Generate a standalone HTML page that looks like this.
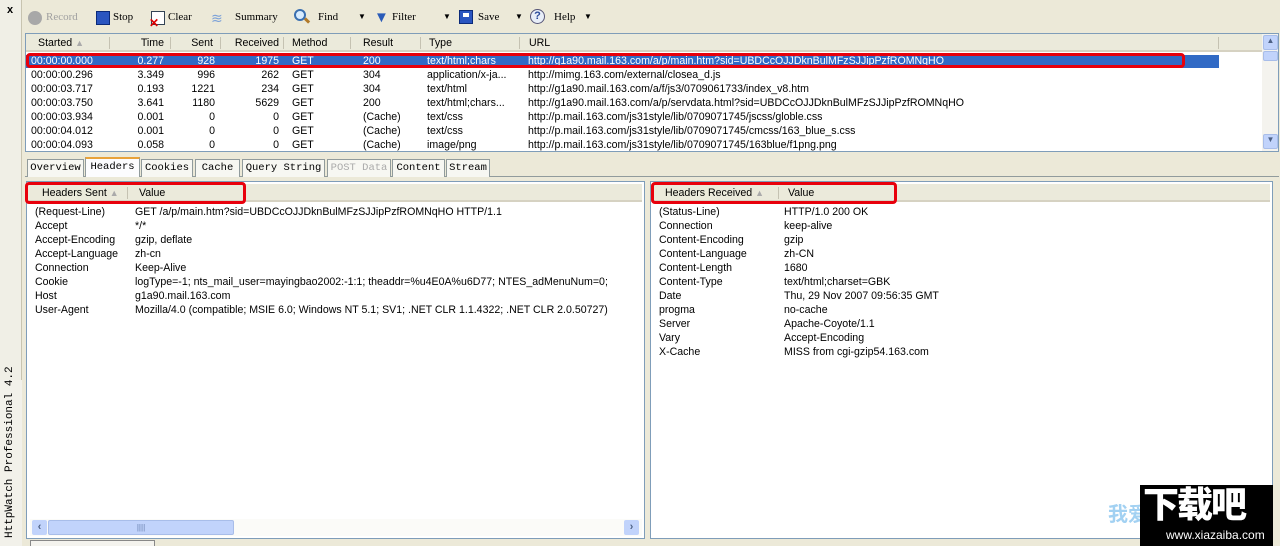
<!DOCTYPE html>
<html><head><meta charset="utf-8"><style>
*{margin:0;padding:0;box-sizing:border-box}
body{width:1280px;height:546px;background:#ece9d8;position:relative;overflow:hidden;font-family:"Liberation Sans",Tahoma,sans-serif;font-size:10.6px;color:#000}
.a{position:absolute;white-space:nowrap}
.tb{font-family:"Liberation Serif","Noto Serif CJK SC",serif;font-size:11px;top:11px}
.ic{position:absolute;width:14px;height:14px}
.panel{position:absolute;background:#fff;border:1px solid #7f9db9}
.hdr{position:absolute;background:#ebeadb;border-bottom:2px solid #d6d2c2;height:18px}
.row{position:absolute;height:14px;line-height:14px}
.red{position:absolute;border:3px solid #e8000c;border-radius:4px}
.tab{position:absolute;top:159px;height:18px;border:1px solid #919b9c;border-bottom:none;background:#f7f7f2;font-family:"Liberation Mono",monospace;font-size:10.5px;line-height:16px;text-align:center}
</style></head><body>
<div class="a" style="left:0;top:0;width:22px;height:546px;background:#f0efe6;border-right:1px solid #c8c4b0"></div>
<div class="a" style="left:0;top:380px;width:22px;height:166px;background:#f2f1ea"></div>
<div class="a" style="left:7px;top:4px;font-weight:bold;font-size:11px">x</div>
<div class="a" style="left:4px;top:538px;transform:rotate(-90deg);transform-origin:0 0;font-family:'Liberation Mono',monospace;font-size:11px;width:160px">HttpWatch Professional 4.2</div>

<div class="ic" style="left:28px;top:11px;border-radius:50%;background:#a8a8a8"></div>
<div class="a tb" style="left:46px;color:#a0a0a0">Record</div>
<div class="ic" style="left:96px;top:11px;background:#2a55c0;border:1px solid #0b2a7a"></div>
<div class="a tb" style="left:113px">Stop</div>
<div class="ic" style="left:151px;top:11px;border:1px solid #345;background:#fff"></div>
<div class="a" style="left:149px;top:16px;color:#d00;font-weight:bold;font-size:12px">✕</div>
<div class="a tb" style="left:168px">Clear</div>
<div class="ic" style="left:211px;top:11px;color:#7aa0d8;font-size:14px;line-height:14px">≋</div>
<div class="a tb" style="left:235px">Summary</div>
<div class="ic" style="left:294px;top:9px;width:12px;height:12px;border:2px solid #3a6fb0;border-radius:50%;background:#d8ecff"></div>
<div class="a" style="left:304px;top:19px;width:6px;height:3px;background:#b27a2a;transform:rotate(45deg)"></div>
<div class="a tb" style="left:318px">Find</div>
<div class="a" style="left:358px;top:12px;font-size:8px">▼</div>
<div class="a" style="left:374px;top:9px;font-size:15px;color:#2a5bb8">▼</div>
<div class="a tb" style="left:392px">Filter</div>
<div class="a" style="left:443px;top:12px;font-size:8px">▼</div>
<div class="ic" style="left:459px;top:10px;background:#2a55c0;border:1px solid #0b2a7a"><div style="margin:2px 3px;height:4px;background:#fff"></div></div>
<div class="a tb" style="left:478px">Save</div>
<div class="a" style="left:515px;top:12px;font-size:8px">▼</div>
<div class="ic" style="left:530px;top:9px;width:15px;height:15px;border-radius:50%;border:1px solid #557;background:#e8eef8;text-align:center;font-weight:bold;color:#2a4a9a;line-height:13px;font-size:11px">?</div>
<div class="a tb" style="left:554px">Help</div>
<div class="a" style="left:584px;top:12px;font-size:8px">▼</div>

<div class="panel" style="left:25px;top:33px;width:1254px;height:119px;overflow:hidden">
 <div class="hdr" style="left:0;top:0;width:1236px"></div>
 <div class="a" style="left:12px;top:3px">Started <span style="color:#aaa;font-size:9px">▲</span></div>
 <div class="a" style="left:0;top:3px;width:138px;text-align:right">Time</div>
 <div class="a" style="left:0;top:3px;width:187px;text-align:right">Sent</div>
 <div class="a" style="left:0;top:3px;width:253px;text-align:right">Received</div>
 <div class="a" style="left:266px;top:3px">Method</div>
 <div class="a" style="left:337px;top:3px">Result</div>
 <div class="a" style="left:403px;top:3px">Type</div>
 <div class="a" style="left:503px;top:3px">URL</div>
 <div class="a" style="left:83px;top:3px;width:1px;height:12px;background:#c5c2b2"></div>
 <div class="a" style="left:144px;top:3px;width:1px;height:12px;background:#c5c2b2"></div>
 <div class="a" style="left:194px;top:3px;width:1px;height:12px;background:#c5c2b2"></div>
 <div class="a" style="left:257px;top:3px;width:1px;height:12px;background:#c5c2b2"></div>
 <div class="a" style="left:324px;top:3px;width:1px;height:12px;background:#c5c2b2"></div>
 <div class="a" style="left:394px;top:3px;width:1px;height:12px;background:#c5c2b2"></div>
 <div class="a" style="left:493px;top:3px;width:1px;height:12px;background:#c5c2b2"></div>
 <div class="a" style="left:1192px;top:3px;width:1px;height:12px;background:#c5c2b2"></div>
 <div class="a" style="left:0;top:21px;width:1193px;height:13px;background:#316ac5"></div>
 <div id="rows"></div>
 <div class="red" style="left:0;top:19px;width:1159px;height:15px"></div>
 <div class="a" style="left:1236px;top:0;width:17px;height:117px;background:#f4f3ee"></div>
 <div class="a" style="left:1237px;top:1px;width:15px;height:15px;background:#c1d3fb;border:1px solid #a8bde9;border-radius:2px;font-size:8px;text-align:center;color:#4d6185">▲</div>
 <div class="a" style="left:1237px;top:17px;width:15px;height:10px;background:#c1d3fb;border:1px solid #a8bde9;border-radius:2px"></div>
 <div class="a" style="left:1237px;top:100px;width:15px;height:15px;background:#c1d3fb;border:1px solid #a8bde9;border-radius:2px;font-size:8px;text-align:center;color:#4d6185">▼</div>
</div>

<div class="a" style="left:25px;top:176px;width:1254px;height:1px;background:#919b9c"></div>
<div class="tab" style="left:27px;width:57px">Overview</div>
<div class="tab" style="left:85px;width:55px;top:157px;height:20px;background:#fcfcfe;border-top:2px solid #e8a23a">Headers</div>
<div class="tab" style="left:141px;width:52px">Cookies</div>
<div class="tab" style="left:195px;width:45px">Cache</div>
<div class="tab" style="left:242px;width:83px">Query String</div>
<div class="tab" style="left:327px;width:64px;color:#aaa">POST Data</div>
<div class="tab" style="left:392px;width:53px">Content</div>
<div class="tab" style="left:446px;width:44px">Stream</div>

<div class="panel" style="left:26px;top:181px;width:619px;height:358px">
 <div class="hdr" style="left:0;top:2px;width:615px"></div>
 <div class="a" style="left:15px;top:5px">Headers Sent <span style="color:#aaa;font-size:9px">▲</span></div>
 <div class="a" style="left:100px;top:5px;width:1px;height:12px;background:#c5c2b2"></div>
 <div class="a" style="left:112px;top:5px">Value</div>
 <div id="ls"></div>
 <div class="a" style="left:3px;top:337px;width:612px;height:17px;background:#fbfbf8"></div>
 <div class="a" style="left:5px;top:338px;width:15px;height:15px;background:#c1d3fb;border-radius:2px;color:#4d6185;font-weight:bold;text-align:center;line-height:15px">‹</div>
 <div class="a" style="left:21px;top:338px;width:186px;height:15px;background:#c1d3fb;border:1px solid #a8bde9;border-radius:2px;text-align:center;color:#6a80b0;font-size:8px;line-height:13px">||||</div>
 <div class="a" style="left:597px;top:338px;width:15px;height:15px;background:#c1d3fb;border-radius:2px;color:#4d6185;font-weight:bold;text-align:center;line-height:15px">›</div>
</div>
<div class="red" style="left:25px;top:182px;width:221px;height:22px"></div>

<div class="panel" style="left:650px;top:181px;width:623px;height:358px">
 <div class="hdr" style="left:0;top:2px;width:619px"></div>
 <div class="a" style="left:14px;top:5px">Headers Received <span style="color:#aaa;font-size:9px">▲</span></div>
 <div class="a" style="left:127px;top:5px;width:1px;height:12px;background:#c5c2b2"></div>
 <div class="a" style="left:137px;top:5px">Value</div>
 <div id="rs"></div>
</div>
<div class="red" style="left:651px;top:182px;width:246px;height:22px"></div>

<div class="a" style="left:30px;top:540px;width:125px;height:6px;border:1px solid #888;border-bottom:none;background:#f4f3ee"></div>

<div class="a" style="left:1108px;top:498px;color:#8cc6f0;font-family:'Noto Sans CJK SC',sans-serif;font-size:20px;font-weight:bold;opacity:.8">我爱自动化</div>
<div class="a" style="left:1140px;top:485px;width:133px;height:61px;background:#000"></div>
<div class="a" style="left:1143px;top:480px;color:#fff;font-family:'Noto Sans CJK SC',sans-serif;font-size:36px;font-weight:900;letter-spacing:-2px;line-height:44px">下载吧</div>
<div class="a" style="left:1166px;top:528px;color:#fff;font-size:12px">www.xiazaiba.com</div>

<script>
var L=[["00:00:00.000","0.277","928","1975","GET","200","text/html;chars","http://g1a90.mail.163.com/a/p/main.htm?sid=UBDCcOJJDknBulMFzSJJipPzfROMNqHO"],
["00:00:00.296","3.349","996","262","GET","304","application/x-ja...","http://mimg.163.com/external/closea_d.js"],
["00:00:03.717","0.193","1221","234","GET","304","text/html","http://g1a90.mail.163.com/a/f/js3/0709061733/index_v8.htm"],
["00:00:03.750","3.641","1180","5629","GET","200","text/html;chars...","http://g1a90.mail.163.com/a/p/servdata.html?sid=UBDCcOJJDknBulMFzSJJipPzfROMNqHO"],
["00:00:03.934","0.001","0","0","GET","(Cache)","text/css","http://p.mail.163.com/js31style/lib/0709071745/jscss/globle.css"],
["00:00:04.012","0.001","0","0","GET","(Cache)","text/css","http://p.mail.163.com/js31style/lib/0709071745/cmcss/163_blue_s.css"],
["00:00:04.093","0.058","0","0","GET","(Cache)","image/png","http://p.mail.163.com/js31style/lib/0709071745/163blue/f1png.png"]];
var h="";L.forEach(function(r,i){var t=20+i*14,c=i==0?"color:#fff;":"";
h+='<div class="row" style="'+c+'left:5px;top:'+t+'px">'+r[0]+'</div>'+
'<div class="row" style="'+c+'left:0;width:138px;text-align:right;top:'+t+'px">'+r[1]+'</div>'+
'<div class="row" style="'+c+'left:0;width:189px;text-align:right;top:'+t+'px">'+r[2]+'</div>'+
'<div class="row" style="'+c+'left:0;width:253px;text-align:right;top:'+t+'px">'+r[3]+'</div>'+
'<div class="row" style="'+c+'left:266px;top:'+t+'px">'+r[4]+'</div>'+
'<div class="row" style="'+c+'left:337px;top:'+t+'px">'+r[5]+'</div>'+
'<div class="row" style="'+c+'left:401px;top:'+t+'px">'+r[6]+'</div>'+
'<div class="row" style="'+c+'left:502px;top:'+t+'px">'+r[7]+'</div>';});
document.getElementById("rows").innerHTML=h;
function pane(id,arr,x1,x2,w){var s="";arr.forEach(function(r,i){var t=23+i*14;
s+='<div class="row" style="left:'+x1+'px;top:'+t+'px">'+r[0]+'</div><div class="row" style="left:'+x2+'px;top:'+t+'px;width:'+w+'px;overflow:hidden">'+r[1]+'</div>';});
document.getElementById(id).innerHTML=s;}
pane("ls",[["(Request-Line)","GET /a/p/main.htm?sid=UBDCcOJJDknBulMFzSJJipPzfROMNqHO HTTP/1.1"],["Accept","*/*"],["Accept-Encoding","gzip, deflate"],["Accept-Language","zh-cn"],["Connection","Keep-Alive"],["Cookie","logType=-1; nts_mail_user=mayingbao2002:-1:1; theaddr=%u4E0A%u6D77; NTES_adMenuNum=0; Province=0"],["Host","g1a90.mail.163.com"],["User-Agent","Mozilla/4.0 (compatible; MSIE 6.0; Windows NT 5.1; SV1; .NET CLR 1.1.4322; .NET CLR 2.0.50727)"]],8,108,508);
pane("rs",[["(Status-Line)","HTTP/1.0 200 OK"],["Connection","keep-alive"],["Content-Encoding","gzip"],["Content-Language","zh-CN"],["Content-Length","1680"],["Content-Type","text/html;charset=GBK"],["Date","Thu, 29 Nov 2007 09:56:35 GMT"],["progma","no-cache"],["Server","Apache-Coyote/1.1"],["Vary","Accept-Encoding"],["X-Cache","MISS from cgi-gzip54.163.com"]],8,133,480);
</script>
</body></html>
